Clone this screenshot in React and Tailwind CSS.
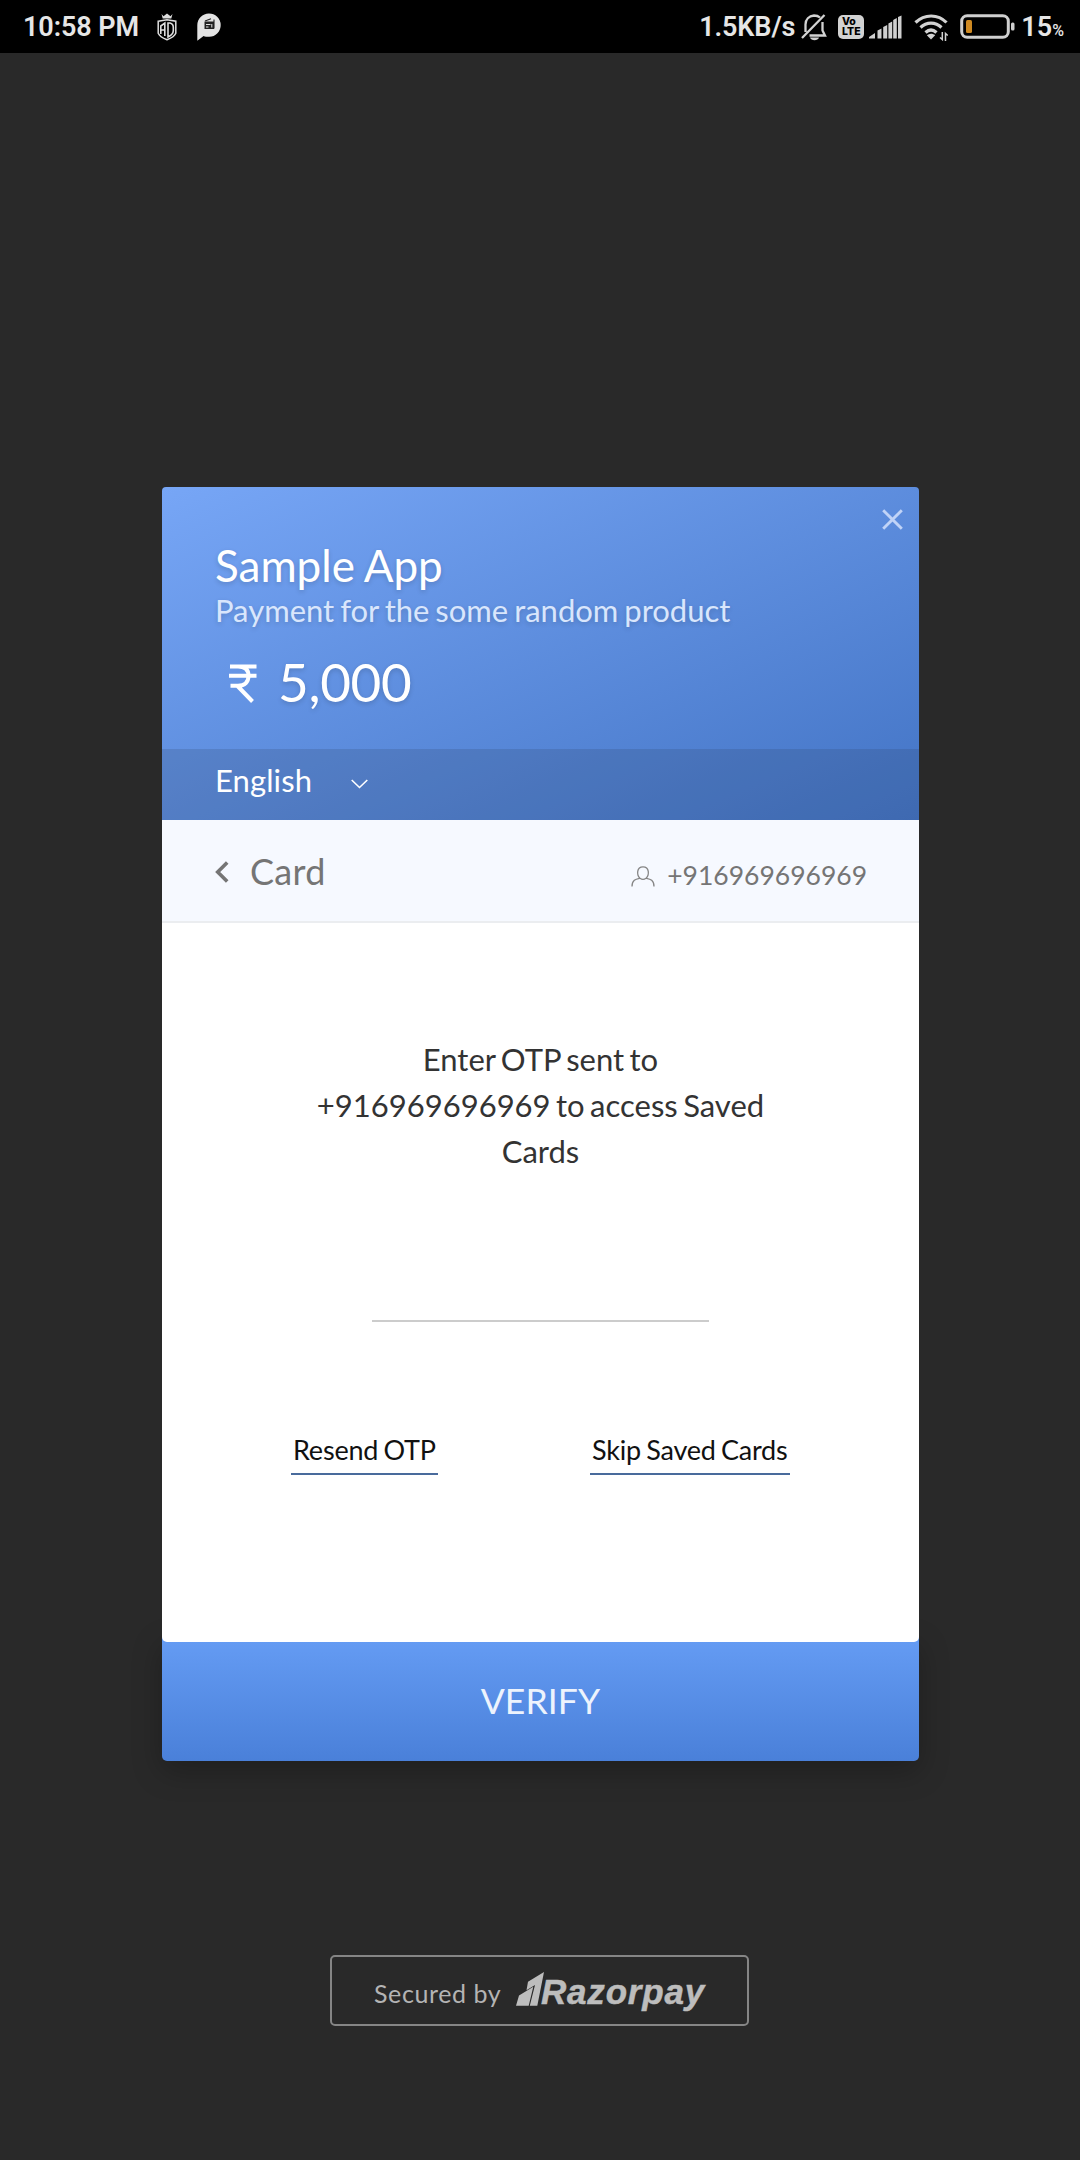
import React from "react";

function StatusBar() {
  return (
    <header className="flex h-[53px] items-center bg-black pr-[16px] pl-[23px] font-[Roboto,sans-serif] text-[27px] font-semibold text-[#e6e6e6]">
      <span className="w-[134px] pt-[2px] leading-[53px] tracking-[-0.1px] whitespace-nowrap">10:58 PM</span>
      <svg className="h-[28px] w-[20px] shrink-0" viewBox="0 0 20 28" fill="none" stroke="#dedede">
        <path d="M4.500 1l2 2.200L10 .5l3.500 2.700 2-2.200-1.200 4.500H5.700z" fill="#dedede" stroke="none" />
        <path d="M1.200 8.200L10 6.800l8.800 1.400v12c-1.200 3-5 5-8.800 6.600-3.800-1.600-7.600-3.600-8.800-6.600z" strokeWidth="1.500" />
        <path d="M3.800 21v-8l4-3v13M3.800 17h4M11 10h2c2.500.5 3.300 2 3.300 4.500v3c0 3-2 5-5.300 6.500z" strokeWidth="1.600" />
      </svg>
      <svg className="ml-[20px] h-[28px] w-[24px] shrink-0" viewBox="0 0 24 28">
        <path d="M.3 27.800V12.200A11.700 11.700 0 1 1 12.200 23.800c-2.600 0-4-.2-5.600-.9z" fill="#e3e3e3" />
        <path d="M7.500 8.500h9.500v7.500H7.500z" fill="#222" />
        <path d="M8 8l6-2.300M17 6.500v9" stroke="#222" strokeWidth="1.100" />
        <path d="M9 11.500h4.500M9 14h2.500M14.800 11v3.500" stroke="#e3e3e3" strokeWidth="1" />
      </svg>
      <span className="ml-auto pt-[2px] leading-[53px] tracking-[-0.100px] whitespace-nowrap">1.5KB/s</span>
      <svg className="ml-[6px] h-[28px] w-[26px] shrink-0" viewBox="0 0 26 28" fill="none" stroke="#d2d2d2" strokeWidth="2.300">
        <path d="M1 25L23.500 2M4.500 19V11.500C4.500 6.500 8 3 13 2.500c2.500 0 4.500.7 6 2M21.500 9v8.500l2.500 5H8.500" />
        <path d="M9 24.500h9c-1 3.500-8 3.500-9 0z" fill="#d2d2d2" stroke="none" />
      </svg>
      <span className="ml-[11px] flex h-[24px] w-[26px] shrink-0 flex-col items-center justify-center rounded-[5px] bg-[#d2d2d2] font-[Inter,sans-serif] text-[10.500px] leading-[10px] font-extrabold text-black">
        <span className="-ml-[5px]">Vo</span>
        <span>LTE</span>
      </span>
      <svg className="ml-[5px] h-[24px] w-[33px] shrink-0" viewBox="0 0 33 24" fill="#cfcfcf">
        <path d="M0 23.500v-1.500l6-4v5.500zM8.500 23.500v-8l4-2v10zM14.200 23.500V12l4-2v13.500zM19.400 23.500V8.500l3.800-2v17zM24.200 23.500V5l3.600-2v20.500zM29 23.500V2l3.500-1.500v23z" />
      </svg>
      <svg className="ml-[12px] h-[28px] w-[34px] shrink-0" viewBox="0 0 34 28" fill="none" stroke="#d2d2d2" strokeWidth="3.200">
        <path d="M1.500 9.500C10.500 .8 24 .8 32.500 9.500M6.500 14.500c6-5.800 15-5.800 21 0M11.500 19.500c3.500-3.200 7.500-3.200 11 0" />
        <path d="M12.800 22.300c2.600-2 5.800-2 8.400 0L17 26.500z" fill="#d2d2d2" stroke="none" />
        <path d="M28.300 19v7.500l-2.300-2M31.500 28v-7.500l2.300 2" strokeWidth="1.500" />
      </svg>
      <svg className="ml-[12px] h-[25px] w-[55px] shrink-0" viewBox="0 0 55 25">
        <rect x="1.700" y="1.700" width="46.600" height="21.600" rx="5.500" fill="none" stroke="#cfcfcf" strokeWidth="3" />
        <rect x="6" y="6" width="6" height="13" rx="1.500" fill="#cf8a22" />
        <rect x="51" y="8.500" width="3.500" height="8" rx="1.500" fill="#cfcfcf" />
      </svg>
      <span className="ml-[6px] pt-[2px] leading-[53px]">15</span>
      <span className="pt-[8px] text-[16px] leading-[45px] font-medium">%</span>
    </header>
  );
}

function MerchantHeader() {
  return (
    <section className="h-[333px] rounded-t-[4px] bg-linear-to-br from-[#77a6f6] to-[#4374c5] text-white">
      <div className="relative h-[262px] px-[53px] pt-[56px] [text-shadow:0_2px_5px_rgba(0,0,0,0.16)]">
        <h1 className="text-[44px] leading-[44px] [word-spacing:-1px]">Sample App</h1>
        <p className="mt-[5px] text-[31px] leading-[36px] text-[#d9e6fc] [word-spacing:-2px]">Payment for the some random product</p>
        <p className="mt-[24px] flex gap-[21px] pl-[14px] text-[53px] leading-[60px] tracking-[-0.300px]">
          <svg className="mt-[12px] h-[39px] w-[28px]" viewBox="0 0 28 39" fill="none" stroke="white" strokeWidth="4" aria-label="₹">
            <path d="M2 2.500h25.500M0 11.700h27.500M1 2.500h8c7 0 10.500 3.500 10.500 9.300S16 21.800 9 21.800H1.500M8.500 22l15 15.500" />
          </svg>
          5,000
        </p>
        <button className="absolute top-[22px] right-[16px]" aria-label="Close">
          <svg className="h-[21px] w-[21px]" viewBox="0 0 21 21" fill="none" stroke="#c0d3f7" strokeWidth="2.900">
            <path d="M1.200 1.200l18.600 18.600M19.800 1.200L1.200 19.800" />
          </svg>
        </button>
      </div>
      <div className="flex h-[71px] items-center bg-[#2d4266]/20 pb-[9px] pl-[53px] text-[31px]">
        <span className="tracking-[0.1px]">English</span>
        <svg className="mt-[7px] ml-[39px] h-[10px] w-[17px]" viewBox="0 0 17 10" fill="none" stroke="white" strokeWidth="1.600">
          <path d="M.7 1l7.800 7.500L16.300 1" />
        </svg>
      </div>
    </section>
  );
}

function MethodBar() {
  return (
    <div className="flex h-[103px] items-center border-b-2 border-[#ebedf0] bg-[#f6f9ff] pr-[52px] pl-[53px] text-[#757575]">
      <svg className="mt-[3px] h-[22px] w-[14px]" viewBox="0 0 14 22" fill="none" stroke="#757575" strokeWidth="3.600">
        <path d="M12.200 1.500L2.700 11l9.500 9.500" />
      </svg>
      <span className="ml-[21px] text-[36px] tracking-[0.3px]">Card</span>
      <svg className="mt-[11px] ml-auto h-[21px] w-[24px]" viewBox="0 0 24 21" fill="none" stroke="#858585" strokeWidth="1.300">
        <path d="M9 12.200C5.500 9 5.500 .8 12 .8s6.500 8.200 3 11.400c-2 1.500-4 1.500-6 0zM9 12.200C5 13 1 13.500 1 20.500M15 12.200c4 .8 8 1.300 8 8.300" />
      </svg>
      <span className="ml-[12px] pt-[11px] text-[26.500px]">+916969696969</span>
    </div>
  );
}

export default function App() {
  return (
    <div className="h-[2160px] w-[1080px] bg-[#292929] font-[Lato,sans-serif]">
      <StatusBar />
      <main className="mt-[434px] ml-[162px] w-[757px]">
        <MerchantHeader />
        <div className="relative z-10 rounded-b-[5px] bg-white">
          <MethodBar />
          <div className="flex h-[719px] flex-col items-center pt-[113px]">
            <p className="w-[460px] text-center text-[31px] leading-[46px] text-[#333] [word-spacing:-2.500px]">
              Enter OTP sent to +916969696969 to access Saved Cards
            </p>
            <div className="mt-[100px] h-[48px] w-[337px] border-b-2 border-[#ccc]" />
            <div className="mt-[110px] flex w-[499px] justify-between text-[27px] leading-[36px] tracking-[-0.200px] whitespace-nowrap text-[#111] [word-spacing:-1.500px]">
              <a className="border-b-2 border-[#496b9c] px-[2px] pb-[5px]">Resend OTP</a>
              <a className="border-b-2 border-[#496b9c] px-[2.500px] pb-[5px]">Skip Saved Cards</a>
            </div>
          </div>
        </div>
        <button className="-mt-[5px] block h-[124px] w-full rounded-b-[5px] bg-linear-to-b from-[#659cf4] to-[#4a80d9] pt-[4px] text-[35.500px] tracking-[0.1px] text-[#edf3fd] shadow-[0_10px_30px_rgba(0,0,0,0.25)]">VERIFY</button>
      </main>
      <footer className="mt-[194px] ml-[330px] flex h-[71px] w-[419px] items-center rounded-[5px] border-2 border-[#858585] pl-[42px]">
        <span className="w-[128px] pt-[7px] text-[25px] tracking-[0.600px] whitespace-nowrap text-[#b4b4b4]">Secured by</span>
        <svg className="-mr-[3px] ml-[14px] h-[34px] w-[28px] -mt-[3px] shrink-0" viewBox="0 0 28 33" preserveAspectRatio="none" fill="#bdbdbd">
          <path d="M28 0l-6.700 32.700h-7.500l5.200-20.200-8.500 5.200L12 9.500zM0 32.700l3-10 14.300-8.400-4.600 18.400z" />
        </svg>
        <span className="pt-[4px] font-['Liberation_Sans',sans-serif] text-[35px] font-bold tracking-[0.800px] text-[#bdbdbd] italic [-webkit-text-stroke:0.500px_#bdbdbd]">Razorpay</span>
      </footer>
    </div>
  );
}
